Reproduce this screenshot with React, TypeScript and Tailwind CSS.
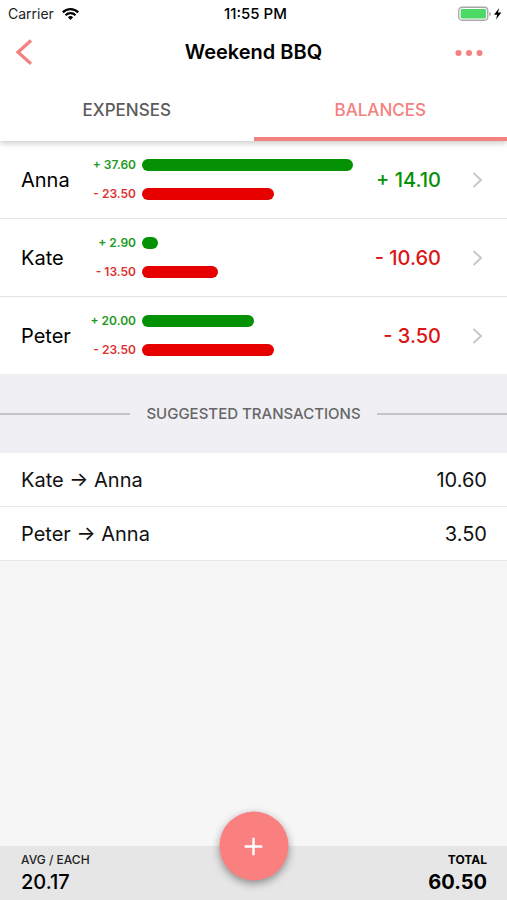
type Balance = {
    name: string;
    paid: number;
    owed: number;
};

type Transaction = {
    from: string;
    to: string;
    amount: number;
};

const balances: Balance[] = [
    { name: "Anna", paid: 37.6, owed: 23.5 },
    { name: "Kate", paid: 2.9, owed: 13.5 },
    { name: "Peter", paid: 20, owed: 23.5 },
];

const transactions: Transaction[] = [
    { from: "Kate", to: "Anna", amount: 10.6 },
    { from: "Peter", to: "Anna", amount: 3.5 },
];

const maxAmount = Math.max(...balances.flatMap((b) => [b.paid, b.owed]));

function signed(value: number) {
    return `${value < 0 ? "-" : "+"} ${Math.abs(value).toFixed(2)}`;
}

function StatusBar() {
    return (
        <div className="grid grid-cols-3 items-center h-7 pl-2 pr-1 text-sm">

            <div className="flex items-center gap-2 text-[#222]">
                <span>Carrier</span>
                <svg width="17" height="12" viewBox="0 0 17 12" fill="none" stroke="#000" strokeWidth="2.2">
                    <path d="M0.8 4.4a10.9 10.9 0 0 1 15.4 0" />
                    <path d="M3.5 7.2a7.1 7.1 0 0 1 10 0" />
                    <path d="M8.5 12 5.9 9.3a3.7 3.7 0 0 1 5.2 0Z" fill="#000" stroke="none" />
                </svg>
            </div>

            <span className="text-center text-[15px] font-medium">11:55 PM</span>

            <svg className="justify-self-end" width="45" height="16" viewBox="0 0 45 16">
                <rect x="0.75" y="1.25" width="29" height="13" rx="3.2" fill="#fff" stroke="#a8a8a8" strokeWidth="1.3" />
                <rect x="2.7" y="3" width="25.2" height="9.5" rx="1" fill="#4cd964" />
                <path d="M31.3 6v4c1.2-.4 1.7-1.1 1.7-2s-.5-1.6-1.7-2Z" fill="#a8a8a8" />
                <path d="M41.2 2 36 8.8h3.2L38 13.6l5.4-7h-3.4Z" fill="#000" />
            </svg>

        </div>
    );
}

function Bar({ value, positive }: { value: number; positive: boolean }) {
    return (
        <div className="flex items-center h-[29px] gap-1.5">
            <span className={`w-[51px] text-right text-xs font-semibold whitespace-nowrap ${positive ? "text-[#209a20]" : "text-[#e03030]"}`}>
                {signed(positive ? value : -value)}
            </span>
            <div className="flex-1">
                <div
                    className={`h-3 rounded-full ${positive ? "bg-[#049104]" : "bg-[#e60000]"}`}
                    style={{ width: `${(value / maxAmount) * 100}%` }}
                />
            </div>
        </div>
    );
}

function BalanceRow({ name, paid, owed }: Balance) {
    const net = paid - owed;

    return (
        <li className="border-b border-[#e4e4e4] last:border-[#efeff4]">
            <button className="flex items-center w-full h-[77px] pl-[21px] pr-6 text-left">
                <span className="w-16 text-xl">{name}</span>
                <div className="flex-1">
                    <Bar value={paid} positive={true} />
                    <Bar value={owed} positive={false} />
                </div>
                <span className={`w-[88px] text-right text-xl font-medium whitespace-nowrap ${net < 0 ? "text-[#dc1414]" : "text-[#078f07]"}`}>
                    {signed(net)}
                </span>
                <svg className="ml-[31px]" width="11" height="18" viewBox="0 0 11 18" fill="none" stroke="#c7c7cc" strokeWidth="2">
                    <path d="M1.5 2 9 9l-7.5 7" />
                </svg>
            </button>
        </li>
    );
}

function App() {
    return (
        <div className="flex flex-col min-h-screen bg-[#f6f6f6] text-black font-['Inter','Liberation_Sans',sans-serif]">

            <header className="relative bg-white shadow-[0_2px_6px_rgba(0,0,0,0.22)]">

                <StatusBar />

                <div className="grid grid-cols-[1fr_auto_1fr] items-center h-[52px] pb-1 pl-4 pr-6">
                    <button aria-label="Back" className="justify-self-start">
                        <svg width="17" height="26" viewBox="0 0 17 26" fill="none" stroke="#f48080" strokeWidth="3.2">
                            <path d="M15 1.5 2 13.2 15 24.8" />
                        </svg>
                    </button>
                    <h1 className="pl-2 text-xl font-semibold">Weekend BBQ</h1>
                    <button aria-label="More" className="justify-self-end">
                        <svg width="28" height="8" viewBox="0 0 28 8" fill="#f48080">
                            <circle cx="3.5" cy="5" r="3" />
                            <circle cx="14" cy="5" r="3" />
                            <circle cx="24.5" cy="5" r="3" />
                        </svg>
                    </button>
                </div>

                <nav className="grid grid-cols-2 h-[61px] text-[17px] font-medium">
                    <button className="border-y-4 border-transparent text-[#5c5c5c]">EXPENSES</button>
                    <button className="border-y-4 border-t-transparent border-b-[#f48080] text-[#f48080]">BALANCES</button>
                </nav>

            </header>

            <main className="flex-1">

                <ul className="bg-white">
                    {balances.map((b) => (
                        <BalanceRow key={b.name} {...b} />
                    ))}
                </ul>

                <div className="flex items-center gap-4 h-[78px] bg-[#efeff4]">
                    <div className="flex-1 h-0.5 bg-[#c4c4c8]" />
                    <h2 className="text-[15px] font-medium text-[#666]">SUGGESTED TRANSACTIONS</h2>
                    <div className="flex-1 h-0.5 bg-[#c4c4c8]" />
                </div>

                <ul className="bg-white text-xl text-[#111]">
                    {transactions.map((t) => (
                        <li key={t.from} className="flex items-center justify-between h-[54px] pl-[21px] pr-5 border-b border-[#e8e8e8]">
                            <span>{t.from} → {t.to}</span>
                            <span>{t.amount.toFixed(2)}</span>
                        </li>
                    ))}
                </ul>

            </main>

            <footer className="relative flex justify-between h-[54px] pl-[21px] pr-5 pt-1.5 bg-[#e6e6e6]">

                <div>
                    <p className="text-xs leading-4 font-medium text-[#222]">AVG / EACH</p>
                    <p className="text-xl font-medium">20.17</p>
                </div>

                <button
                    aria-label="Add expense"
                    className="absolute left-1/2 top-0 flex items-center justify-center size-[69px] -translate-x-1/2 -translate-y-1/2 rounded-full bg-[#fa8080] shadow-[0_3px_8px_rgba(0,0,0,0.4)]"
                >
                    <svg width="18" height="18" viewBox="0 0 18 18" stroke="#fff" strokeWidth="2.4">
                        <path d="M9 0v18M0 9h18" />
                    </svg>
                </button>

                <div className="text-right">
                    <p className="text-xs leading-4 font-bold">TOTAL</p>
                    <p className="text-xl font-bold">60.50</p>
                </div>

            </footer>

        </div>
    );
}

export default App;
